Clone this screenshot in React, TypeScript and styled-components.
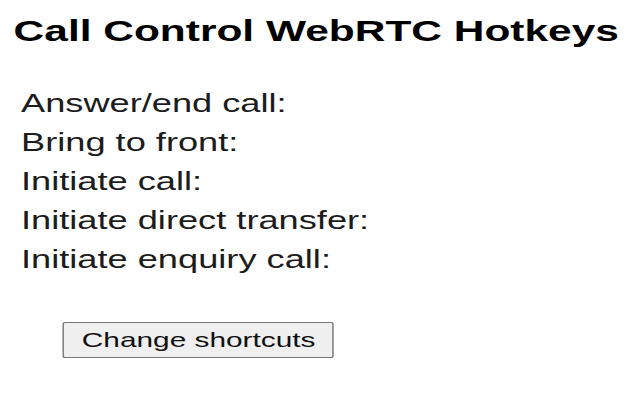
import React from "react";
import styled, { createGlobalStyle } from "styled-components";

const Global = createGlobalStyle`
  html, body { margin: 0; padding: 0; background: #ffffff; }
  body { width: 640px; height: 400px; overflow: hidden; font-family: "Liberation Sans", Arial, sans-serif; }
`;

// The reference popup is stretched horizontally by ~1.42
const Stage = styled.div`
  width: 451px;
  height: 400px;
  transform: scaleX(1.42);
  transform-origin: 0 0;
  box-sizing: border-box;
  padding: 14px 0 0 9.6px;
  display: flex;
  flex-direction: column;
  color: #111;
`;

const Title = styled.h1`
  margin: 0;
  font-family: "Liberation Sans", Arial, sans-serif;
  font-weight: 700;
  font-size: 29.9px;
  line-height: 34px;
  color: #000;
`;

const List = styled.div`
  margin: 36px 0 0 5.2px;
  display: flex;
  flex-direction: column;
`;

const Row = styled.div`
  font-size: 25.5px;
  line-height: 39px;
  color: #1c1c1c;
`;

const Button = styled.button`
  align-self: flex-start;
  margin: 43px 0 0 34.8px;
  width: 191px;
  height: 36px;
  box-sizing: border-box;
  padding: 0;
  font-family: "Liberation Sans", Arial, sans-serif;
  font-size: 21px;
  color: #111;
  background: #efefef;
  border: 1px solid #767676;
  border-radius: 2px;
`;

const rows = [
  "Answer/end call:",
  "Bring to front:",
  "Initiate call:",
  "Initiate direct transfer:",
  "Initiate enquiry call:",
];

export default function App() {
  return (
    <>
      <Global />
      <Stage>
        <Title>Call Control WebRTC Hotkeys</Title>
        <List>
          {rows.map((r) => (
            <Row key={r}>{r}</Row>
          ))}
        </List>
        <Button>Change shortcuts</Button>
      </Stage>
    </>
  );
}
